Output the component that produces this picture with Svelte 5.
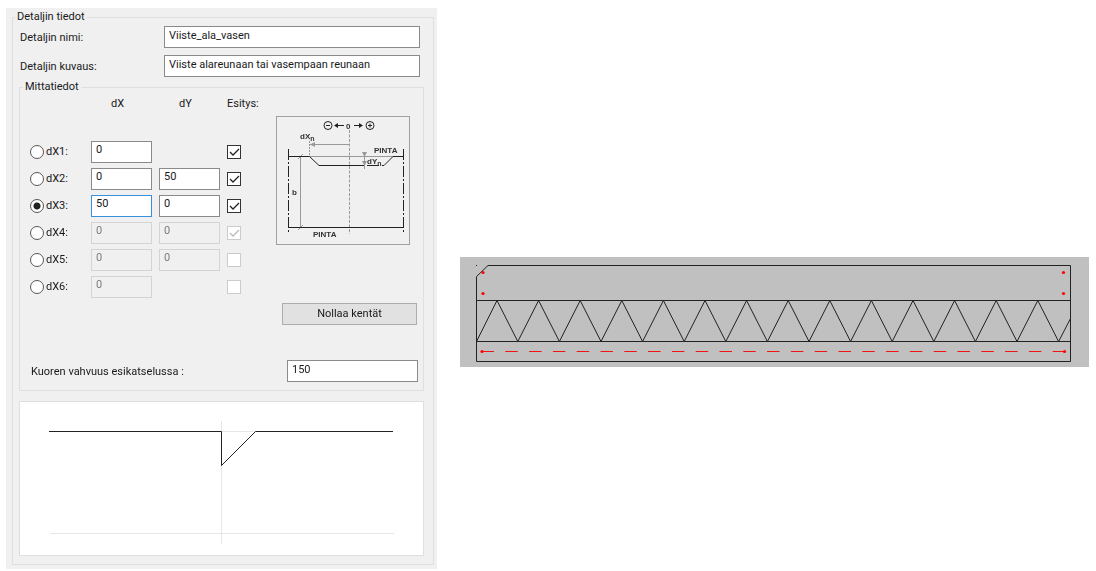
<script lang="ts">
  import { onMount } from 'svelte';

  interface Row {
    name: string;
    x: string;
    y: string | null;
    shown: boolean;
    enabled: boolean;
  }

  let detailName = $state('Viiste_ala_vasen');
  let description = $state('Viiste alareunaan tai vasempaan reunaan');
  let thickness = $state('150');
  let active = $state('dX3');

  let rows: Row[] = $state([
    { name: 'dX1', x: '0', y: null, shown: true, enabled: true },
    { name: 'dX2', x: '0', y: '50', shown: true, enabled: true },
    { name: 'dX3', x: '50', y: '0', shown: true, enabled: true },
    { name: 'dX4', x: '0', y: '0', shown: true, enabled: false },
    { name: 'dX5', x: '0', y: '0', shown: false, enabled: false },
    { name: 'dX6', x: '0', y: null, shown: false, enabled: false }
  ]);

  let form: HTMLFormElement;

  onMount(() => {
    const field = form.querySelector<HTMLInputElement>('#dX3-x');
    field?.focus();
    field?.setSelectionRange(2, 2);
  });

  function resetFields() {
    for (const row of rows) {
      row.x = '0';
      if (row.y !== null) row.y = '0';
    }
  }

  // insulation zigzag, ends on the right edge of the panel
  const step = 41.6;
  let zigzag = 'M16.5 84.5';
  for (let i = 0; i < 14; i++) {
    const peak = 37 + i * step;
    zigzag += `L${peak} 43.5L${peak + step / 2} 84.5`;
  }
  zigzag += 'L610.5 61.5';

  // reinforcement bar, drawn as separate dashes
  let bar = '';
  for (let i = 0; i < 25; i++) {
    bar += `M${21.5 + i * 23.8} 94.5h12.5`;
  }
</script>

<main class="page">
  <form class="dialog" bind:this={form} onsubmit={(e) => e.preventDefault()}>
    <fieldset class="group details">
      <legend>Detaljin tiedot</legend>

      <div class="field">
        <label for="name">Detaljin nimi:</label>
        <input id="name" type="text" bind:value={detailName} />
      </div>
      <div class="field">
        <label for="description">Detaljin kuvaus:</label>
        <input id="description" type="text" bind:value={description} />
      </div>

      <fieldset class="group measures">
        <legend>Mittatiedot</legend>

        <div class="columns">
          <div class="table">
            <div class="row head">
              <span></span>
              <span class="axis">dX</span>
              <span class="axis">dY</span>
              <span>Esitys:</span>
            </div>
            {#each rows as row (row.name)}
              <div class="row">
                <label class="pick">
                  <input type="radio" name="active" value={row.name} bind:group={active} />
                  {row.name}:
                </label>
                <input id="{row.name}-x" type="text" aria-label="{row.name} dX" bind:value={row.x} disabled={!row.enabled} />
                {#if row.y !== null}
                  <input type="text" aria-label="{row.name} dY" bind:value={row.y} disabled={!row.enabled} />
                {:else}
                  <span></span>
                {/if}
                <input type="checkbox" aria-label="{row.name} Esitys" bind:checked={row.shown} disabled={!row.enabled} />
              </div>
            {/each}
          </div>

          <div class="side">
            <svg class="guide" viewBox="0 0 134 129" aria-hidden="true">
              <g fill="none" stroke="#999">
                <path d="M73.5 14V118" stroke-dasharray="3 1.5" />
                <path d="M33.5 25V41" stroke-dasharray="2 1" />
                <path d="M34 28.5H73M33.5 40.5H117M24.5 41V111M88.5 36V53" />
                <path d="M22 43L27 38M22 114L27 109" />
              </g>
              <path fill="#999" d="M34 28.5L39 26V31ZM88.5 41L86 36H91ZM88.5 50L86 45H91Z" />
              <g fill="none" stroke="#222">
                <path d="M12.5 33V118M127.5 33V118" stroke-dasharray="11 2 2 2" />
                <path d="M12 40.5H33.5L43 49.5H88M91 49.5H103M106 49.5H108L117 40.5H127M12 111.5H127" />
                <circle cx="52" cy="9.5" r="4" />
                <circle cx="94" cy="9.5" r="4" />
                <path d="M50 9.5H54M92 9.5H96M94 7.5V11.5M60 9.5H68M78 9.5H85" />
              </g>
              <path fill="#222" d="M58 9.5L62 7V12ZM87 9.5L83 7V12Z" />
              <g class="marks">
                <text x="70" y="13">0</text>
                <text x="24" y="23">dX<tspan dy="2" class="sub">n</tspan></text>
                <text x="98" y="37">PINTA</text>
                <text x="91" y="48">dY<tspan dy="2" class="sub">n</tspan></text>
                <text x="16" y="79">b</text>
                <text x="37" y="121">PINTA</text>
              </g>
            </svg>
            <button type="button" onclick={resetFields}>Nollaa kentät</button>
          </div>
        </div>

        <div class="field thickness">
          <label for="thickness">Kuoren vahvuus esikatselussa :</label>
          <input id="thickness" type="text" bind:value={thickness} />
        </div>
      </fieldset>

      <svg class="preview" viewBox="0 0 405 155" aria-hidden="true">
        <path d="M202.5 20V143M31 132.5H375M202 30.5H237" fill="none" stroke="#e6e6e6" />
        <path d="M30 30.5H202.5V64.5L236.5 30.5H374" fill="none" stroke="#222" />
      </svg>
    </fieldset>
  </form>

  <svg class="section" viewBox="0 0 629 110" aria-hidden="true">
    <g fill="none" stroke="#222">
      <path d="M28 8.5H610.5V104.5H16.5V19.5Z" />
      <path d="M16.5 43.5H610.5M16.5 84.5H610.5" />
      <path d={zigzag} />
      <path d="M16 8.5H17" />
    </g>
    <path class="bar" d={bar} />
    <g fill="#f00">
      <circle cx="23" cy="15.5" r="1.6" />
      <circle cx="23" cy="36.5" r="1.6" />
      <circle cx="603.5" cy="15.5" r="1.6" />
      <circle cx="603.5" cy="36.5" r="1.6" />
      <circle cx="22" cy="94.5" r="1.6" />
      <circle cx="604.5" cy="94.5" r="1.6" />
    </g>
  </svg>
</main>

<style>
  :global(body) {
    margin: 0;
    background: #fff;
  }

  .page {
    display: grid;
    grid-template-columns: minmax(0, 431fr) minmax(0, 629fr);
    column-gap: 23px;
    align-items: start;
    padding: 8px 7px 2px 6px;
    font: 11px/16px Roboto, "Noto Sans", sans-serif;
    color: #1a1a1a;
  }

  .dialog {
    padding: 1px 3px 4px 6px;
    background: #f0f0f0;
  }

  .group {
    min-width: 0;
    margin: 0;
    border: 1px solid #dfdfdf;
  }

  legend {
    padding: 0 2px;
  }

  .details {
    padding: 1px 9px 8px 6px;
  }

  .details > legend {
    margin-left: -4px;
  }

  .measures {
    margin-top: -5px;
    padding: 1px 5px 8px 10px;
  }

  .measures > legend {
    margin-left: -7px;
  }

  .field {
    display: grid;
    grid-template-columns: 144px 1fr;
    align-items: center;
    margin: 0 4px 7px 1px;
  }

  .field label {
    padding-top: 2px;
  }

  .thickness {
    grid-template-columns: 256px 1fr;
    margin: 35px 0 0 1px;
  }

  input,
  button {
    box-sizing: border-box;
    font: inherit;
    color: inherit;
  }

  input[type='text'] {
    width: 100%;
    height: 22px;
    margin: 0;
    padding: 0 4px 4px;
    border: 1px solid #8a8a8a;
    border-radius: 0;
    outline: none;
    background: #fff;
  }

  input[type='text']:disabled {
    border-color: #d4d4d4;
    background: #f0f0f0;
    color: #7c7c7c;
  }

  .table input[type='text']:focus {
    border-color: #3a8fdc;
  }

  .columns {
    display: flex;
    gap: 18px;
  }

  .row {
    display: grid;
    grid-template-columns: 54px 61px 61px 31px;
    column-gap: 7px;
    align-items: center;
    height: 27px;
  }

  .head {
    height: 16px;
    margin-bottom: 26px;
  }

  .axis {
    padding-left: 20px;
  }

  .pick {
    display: flex;
    align-items: center;
    gap: 2px;
  }

  input[type='radio'],
  input[type='checkbox'] {
    appearance: none;
    width: 14px;
    height: 14px;
    margin: 0;
    border: 1px solid #333;
    background: #fff;
  }

  input[type='radio'] {
    border-radius: 50%;
    border-color: #555;
  }

  input[type='radio']:checked {
    background: radial-gradient(circle, #222 3px, #fff 4px);
  }

  input[type='checkbox']:checked {
    background: #fff url("data:image/svg+xml,%3Csvg xmlns='http://www.w3.org/2000/svg' viewBox='0 0 12 12'%3E%3Cpath d='M2 6l3 3 6-6' fill='none' stroke='%23222' stroke-width='1.3'/%3E%3C/svg%3E");
  }

  input[type='checkbox']:disabled {
    border-color: #ccc;
  }

  input[type='checkbox']:checked:disabled {
    background-image: url("data:image/svg+xml,%3Csvg xmlns='http://www.w3.org/2000/svg' viewBox='0 0 12 12'%3E%3Cpath d='M2 6l3 3 6-6' fill='none' stroke='%23bbb' stroke-width='1.3'/%3E%3C/svg%3E");
  }

  .side {
    display: flex;
    flex: 1;
    flex-direction: column;
    min-width: 0;
    padding-top: 20px;
  }

  .guide {
    margin-right: 8px;
    outline: 1px solid #a0a0a0;
    outline-offset: -1px;
  }

  .marks {
    font: bold 8px "Liberation Sans", sans-serif;
    fill: #333;
  }

  .sub {
    font-size: 7px;
  }

  button {
    height: 22px;
    margin: 58px 1px 0 6px;
    padding: 0;
    border: 1px solid #adadad;
    border-radius: 0;
    background: #e1e1e1;
  }

  .preview {
    display: block;
    width: 100%;
    margin-top: 10px;
    background: #fff;
    outline: 1px solid #dfdfdf;
    outline-offset: -1px;
  }

  .section {
    display: block;
    width: 100%;
    margin-top: 249px;
    background: #c0c0c0;
  }

  .bar {
    fill: none;
    stroke: #f01414;
  }
</style>
